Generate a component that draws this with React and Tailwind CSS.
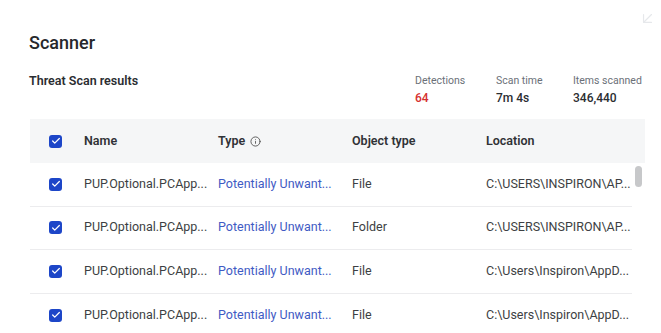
import React from 'react';
import { ArrowDownLeft, Info, Check } from 'lucide-react';

const rows = [
  { name: 'PUP.Optional.PCApp...', type: 'Potentially Unwant...', obj: 'File', loc: 'C:\\USERS\\INSPIRON\\AP...' },
  { name: 'PUP.Optional.PCApp...', type: 'Potentially Unwant...', obj: 'Folder', loc: 'C:\\USERS\\INSPIRON\\AP...' },
  { name: 'PUP.Optional.PCApp...', type: 'Potentially Unwant...', obj: 'File', loc: 'C:\\Users\\Inspiron\\AppD...' },
  { name: 'PUP.Optional.PCApp...', type: 'Potentially Unwant...', obj: 'File', loc: 'C:\\Users\\Inspiron\\AppD...' },
];

const Box = () => (
  <div className="w-[13px] h-[13px] rounded-[3px] bg-[#1d46c8] flex items-center justify-center">
    <Check className="w-[10px] h-[10px] text-white" strokeWidth={3} />
  </div>
);

const Stat = ({ label, value, red, w }) => (
  <div className={`${w} mt-[2px]`}>
    <div className="text-[10.5px] text-[#6b7078] leading-[14px]">{label}</div>
    <div className={`text-[12px] leading-[16px] mt-[2px] font-medium ${red ? 'text-[#d62f2f]' : 'text-[#2b2d31]'}`}>{value}</div>
  </div>
);

export default function App() {
  return (
    <div
      className="relative w-[661px] h-[333px] bg-white overflow-hidden text-[#2b2d31]"
      style={{ fontFamily: 'Roboto, "Liberation Sans", sans-serif' }}
    >
      <ArrowDownLeft className="absolute right-[4px] top-[9px] w-[19px] h-[19px] text-[#e6e8eb]" strokeWidth={1.5} />

      <div className="pl-[29px] pt-[31px]">
        <h1 className="text-[18px] font-medium leading-[24px] text-[#26282c]">Scanner</h1>

        <div className="flex items-start mt-[17px] pr-[15px]">
          <div className="text-[12.5px] font-semibold leading-[16px] mt-[1px] flex-1">Threat Scan results</div>
          <Stat label="Detections" value="64" red w="w-[81px]" />
          <Stat label="Scan time" value="7m 4s" w="w-[77px]" />
          <Stat label="Items scanned" value="346,440" w="w-[73px]" />
        </div>

        <div className="mt-[13px] ml-[1px] w-[615px]">
          <div className="flex items-center h-[44px] bg-[#f5f6f7] text-[12.5px] font-semibold text-[#303236]">
            <div className="w-[54px] pl-[19px]"><Box /></div>
            <div className="w-[134px]">Name</div>
            <div className="w-[134px] flex items-center gap-[5px]">
              Type <Info className="w-[11px] h-[11px] text-[#555]" strokeWidth={2} />
            </div>
            <div className="w-[134px]">Object type</div>
            <div className="flex-1">Location</div>
          </div>

          <div className="flex">
            <div className="w-[602px]">
              {rows.map((r, i) => (
                <div
                  key={i}
                  className={`flex items-center h-[43.5px] text-[12.5px] text-[#3d3f43] ${i < rows.length - 1 ? 'border-b border-[#ececee]' : ''}`}
                >
                  <div className="w-[54px] pl-[19px]"><Box /></div>
                  <div className="w-[134px] whitespace-nowrap">{r.name}</div>
                  <div className="w-[134px] whitespace-nowrap text-[#3f5bc4]">{r.type}</div>
                  <div className="w-[134px]">{r.obj}</div>
                  <div className="flex-1 whitespace-nowrap">{r.loc}</div>
                </div>
              ))}
            </div>
            <div className="flex-1 pt-[3px] pl-[3px]">
              <div className="w-[7px] h-[21px] rounded-full bg-[#c7c8ca]" />
            </div>
          </div>
        </div>
      </div>
    </div>
  );
}
